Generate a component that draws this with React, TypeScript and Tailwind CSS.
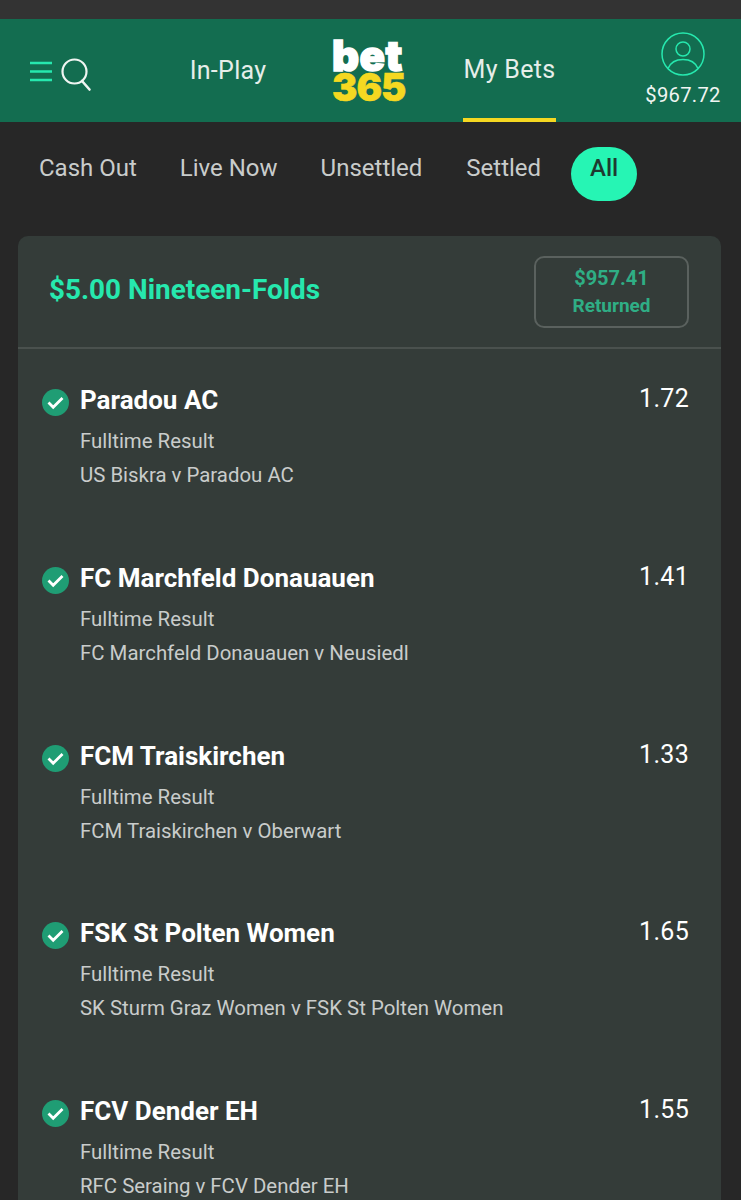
const bets = [
  { name: "Paradou AC", match: "US Biskra v Paradou AC", odds: "1.72" },
  { name: "FC Marchfeld Donauauen", match: "FC Marchfeld Donauauen v Neusiedl", odds: "1.41" },
  { name: "FCM Traiskirchen", match: "FCM Traiskirchen v Oberwart", odds: "1.33" },
  { name: "FSK St Polten Women", match: "SK Sturm Graz Women v FSK St Polten Women", odds: "1.65" },
  { name: "FCV Dender EH", match: "RFC Seraing v FCV Dender EH", odds: "1.55" },
];

function MenuSearchIcon() {
  return (
    <svg width="62" height="34" viewBox="0 0 62 34" fill="none" className="mt-[8px] shrink-0">
      <path d="M0 5h22M0 13.500h22M0 22h22" stroke="#26e8ae" strokeWidth="2.600" />
      <circle cx="44.500" cy="13.500" r="12" stroke="#f0f5f2" strokeWidth="2.200" />
      <path d="M52 23l7.500 8.500" stroke="#f0f5f2" strokeWidth="2.600" strokeLinecap="round" />
    </svg>
  );
}

function UserIcon() {
  return (
    <svg width="44" height="44" viewBox="0 0 44 44" fill="none" className="shrink-0">
      <circle cx="22" cy="22" r="21" stroke="#26e8ae" strokeWidth="1.500" />
      <circle cx="22" cy="17" r="7" stroke="#26e8ae" strokeWidth="1.500" />
      <path d="M7 36.500C9.500 30.500 15 27.500 22 27.500S34.500 30.500 37 36.500" stroke="#26e8ae" strokeWidth="1.500" />
    </svg>
  );
}

function CheckBadge() {
  return (
    <svg width="27" height="27" viewBox="0 0 27 27" className="shrink-0">
      <circle cx="13.500" cy="13.500" r="13.500" fill="#1f9d74" />
      <path d="M6.500 13.500l4.700 4.700 9.300-9.200" fill="none" stroke="#fff" strokeWidth="2.800" />
    </svg>
  );
}

function NavLink(props: { label: string; active?: boolean; className: string }) {
  return (
    <div className={`relative flex h-full items-center justify-center text-[25px] tracking-[0.3px] text-[#e6eeea] ${props.className}`}>
      <span>{props.label}</span>
      {props.active && <div className="absolute bottom-0 left-0 h-[4px] w-full bg-[#f5d821]" />}
    </div>
  );
}

function BetRow(props: { name: string; match: string; odds: string }) {
  return (
    <div className="h-[177.750px] pl-[24px] pr-[32px] pt-[34px]">
      <div className="flex items-start justify-between">
        <div className="flex gap-[11px]">
          <div className="pt-[6px]">
            <CheckBadge />
          </div>
          <div className="-mt-[1px]">
            <div className="text-[26px] font-bold leading-[36px] text-white">{props.name}</div>
            <div className="mt-[6px] text-[20.400px] leading-[34px] text-[#c9cccb]">Fulltime Result</div>
            <div className="text-[20.400px] leading-[34px] text-[#c9cccb]">{props.match}</div>
          </div>
        </div>
        <div className="-mt-[2px] text-[25px] leading-[36px] tracking-[0.3px] text-white">{props.odds}</div>
      </div>
    </div>
  );
}

export default function App() {
  return (
    <div className="h-[1200px] overflow-hidden bg-[#272727] font-['Roboto',sans-serif]">
      <div className="h-[19px] bg-[#333333]" />
      <div className="flex h-[103px] items-center bg-[#136d50] pl-[30px]">
        <MenuSearchIcon />
        <NavLink label="In-Play" className="ml-[97px] w-[78px]" />
        <div className="ml-[65px] flex w-[74px] flex-col items-start font-['Inter',sans-serif] font-black">
          <span className="text-[42px] leading-[34px] tracking-[0.5px] text-white [-webkit-text-stroke:1.500px_white]">bet</span>
          <span className="text-[38px] leading-[29px] tracking-[-1px] text-[#f5d821] [-webkit-text-stroke:0.500px_#f5d821]">365</span>
        </div>
        <NavLink label="My Bets" active className="ml-[57px] w-[93px] pb-[2px]" />
        <div className="-mt-[2px] ml-[89px] flex w-[76px] flex-col items-center">
          <UserIcon />
          <div className="mt-[6px] text-[20.200px] leading-[26px] tracking-[0.3px] text-[#f0f5f2]">$967.72</div>
        </div>
      </div>

      <div className="flex h-[114px] items-start pl-[39px] pt-[25px] text-[24px] leading-[42px] text-[#c9cccb]">
        <span>Cash Out</span>
        <span className="ml-[43px]">Live Now</span>
        <span className="ml-[43px]">Unsettled</span>
        <span className="ml-[44px]">Settled</span>
        <div className="ml-[30px] flex h-[54px] w-[66px] justify-center rounded-full bg-[#26f5b4] font-medium leading-[42px] text-[#1e3a30]">
          All
        </div>
      </div>

      <div className="mx-[18px] w-[703px] rounded-t-[10px] bg-[#343c39]">
        <div className="flex h-[113px] items-center justify-between border-b-2 border-[#4a514e] pl-[31px] pr-[32px]">
          <div className="-mt-[4px] text-[27.900px] font-bold text-[#26e8ae]">$5.00 Nineteen-Folds</div>
          <div className="flex h-[72px] w-[155px] flex-col items-center justify-center rounded-[10px] border-2 border-[#5a615e] font-bold leading-[28px] text-[#2fae85]">
            <span className="text-[20px]">$957.41</span>
            <span className="text-[19px]">Returned</span>
          </div>
        </div>
        {bets.map((bet) => (
          <BetRow key={bet.name} name={bet.name} match={bet.match} odds={bet.odds} />
        ))}
      </div>
    </div>
  );
}
